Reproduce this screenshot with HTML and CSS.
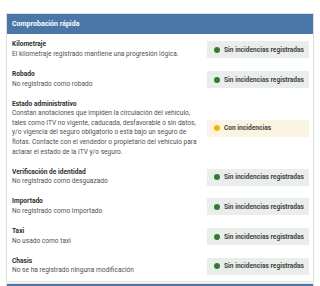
FILE: index.html
```html
<!DOCTYPE html>
<html lang="es">
<head>
<meta charset="utf-8">
<link rel="stylesheet" href="styles.css">
</head>
<body>
<div class="page">
  <section class="card">
    <div class="card-head">Comprobación rápida</div>
    <div class="rows">
      <div class="row">
        <div class="info"><div class="title">Kilometraje</div><div class="desc">El kilometraje registrado mantiene una progresión lógica.</div></div>
        <div class="badge ok"><span class="dot"></span>Sin incidencias registradas</div>
      </div>
      <div class="row">
        <div class="info"><div class="title">Robado</div><div class="desc">No registrado como robado</div></div>
        <div class="badge ok"><span class="dot"></span>Sin incidencias registradas</div>
      </div>
      <div class="row">
        <div class="info"><div class="title">Estado administrativo</div><div class="desc">Constan anotaciones que impiden la circulación del vehículo, tales como ITV no vigente, caducada, desfavorable o sin datos, y/o vigencia del seguro obligatorio o está bajo un seguro de flotas. Contacte con el vendedor o propietario del vehículo para aclarar el estado de la ITV y/o seguro.</div></div>
        <div class="badge warn"><span class="dot"></span>Con incidencias</div>
      </div>
      <div class="row">
        <div class="info"><div class="title">Verificación de identidad</div><div class="desc">No registrado como desguazado</div></div>
        <div class="badge ok"><span class="dot"></span>Sin incidencias registradas</div>
      </div>
      <div class="row">
        <div class="info"><div class="title">Importado</div><div class="desc">No registrado como importado</div></div>
        <div class="badge ok"><span class="dot"></span>Sin incidencias registradas</div>
      </div>
      <div class="row">
        <div class="info"><div class="title">Taxi</div><div class="desc">No usado como taxi</div></div>
        <div class="badge ok"><span class="dot"></span>Sin incidencias registradas</div>
      </div>
      <div class="row">
        <div class="info"><div class="title">Chasis</div><div class="desc">No se ha registrado ninguna modificación</div></div>
        <div class="badge ok"><span class="dot"></span>Sin incidencias registradas</div>
      </div>
    </div>
  </section>
  <section class="card next">
    <div class="card-head">&nbsp;</div>
  </section>
</div>
</body>
</html>
```
FILE: styles.css
```css
html, body {
  margin: 0;
  padding: 0;
  background: #ffffff;
  font-family: Roboto, "Liberation Sans", sans-serif;
}
.page {
  padding: 13px 6px 0 6px;
}
.card {
  border: 1px solid #dedede;
  background: #fff;
}
.card.next {
  margin-top: 1px;
}
.card-head {
  background: #4a76a8;
  color: #fff;
  font-size: 7px;
  font-weight: 700;
  height: 20px;
  line-height: 20px;
  padding: 0 5px;
}
.rows {
  padding: 1px 4px 0 5px;
}
.row {
  display: flex;
  align-items: center;
  padding: 5.25px 0 5.25px 0;
}
.info {
  flex: 1;
  min-width: 0;
  padding-right: 8px;
}
.title {
  font-size: 6.6px;
  font-weight: 700;
  color: #2f2f2f;
  line-height: 9.6px;
}
.desc {
  font-size: 6.6px;
  color: #4f4f4f;
  line-height: 9.6px;
}
.badge {
  width: 102px;
  height: 17px;
  flex: none;
  display: flex;
  align-items: center;
  box-sizing: border-box;
  padding-left: 7px;
  font-size: 6.6px;
  font-weight: 700;
  color: #444;
}
.badge.ok {
  background: #e9eeea;
}
.badge.warn {
  background: #fbf4e2;
}
.dot {
  width: 6px;
  height: 6px;
  border-radius: 50%;
  margin-right: 4px;
}
.ok .dot {
  background: #2e7d32;
}
.warn .dot {
  background: #f2b705;
}
```
